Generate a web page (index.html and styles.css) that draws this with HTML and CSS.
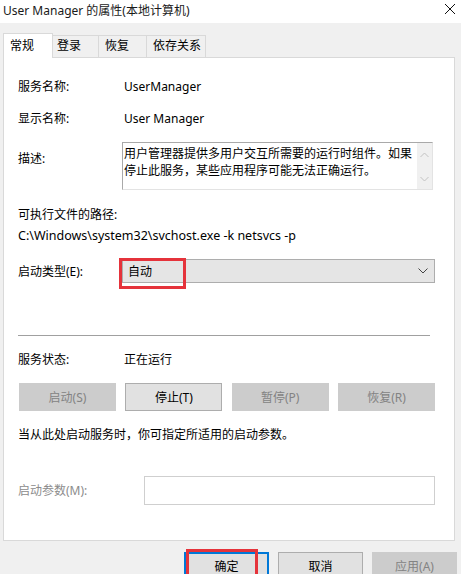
FILE: index.html
```html
<!DOCTYPE html>
<html lang="zh-CN">
<head>
<meta charset="utf-8">
<title>User Manager 的属性(本地计算机)</title>
<link rel="stylesheet" href="styles.css">
</head>
<body>
<div class="window">
  <div class="titlebar">
    <span class="title">User Manager 的属性(本地计算机)</span>
    <svg class="close" width="12" height="12" viewBox="0 0 12 12"><path d="M1 1 L11 11 M11 1 L1 11" stroke="#111" stroke-width="1" fill="none"/></svg>
  </div>
  <div class="tabs">
    <div class="tab active">常规</div>
    <div class="tab t2">登录</div>
    <div class="tab t3">恢复</div>
    <div class="tab t4">依存关系</div>
  </div>
  <div class="panel">
    <div class="row r1"><span class="label">服务名称:</span><span class="value">UserManager</span></div>
    <div class="row r2"><span class="label">显示名称:</span><span class="value">User Manager</span></div>
    <div class="row r3">
      <span class="label label-top">描述:</span>
      <div class="textarea">
        <div class="ta-text">用户管理器提供多用户交互所需要的运行时组件。如果<br>停止此服务，某些应用程序可能无法正确运行。</div>
        <div class="ta-scroll">
          <svg width="9" height="6" viewBox="0 0 9 6"><path d="M0.5 5 L4.5 1 L8.5 5" stroke="#c2c2c2" fill="none"/></svg>
          <svg width="9" height="6" viewBox="0 0 9 6"><path d="M0.5 1 L4.5 5 L8.5 1" stroke="#c2c2c2" fill="none"/></svg>
        </div>
      </div>
    </div>
    <div class="line r4">可执行文件的路径:</div>
    <div class="line r4b path">C:\Windows\system32\svchost.exe -k netsvcs -p</div>
    <div class="row r5">
      <span class="label">启动类型(E):</span>
      <div class="select">
        <span class="sel-text">自动</span>
        <svg class="chev" width="10" height="6" viewBox="0 0 10 6"><path d="M0.5 0.5 L5 5 L9.5 0.5" stroke="#444" fill="none"/></svg>
        <div class="mark mark-select"></div>
      </div>
    </div>
    <div class="sep"></div>
    <div class="row r6"><span class="label">服务状态:</span><span class="value">正在运行</span></div>
    <div class="btnrow">
      <div class="btn disabled">启动(S)</div>
      <div class="btn">停止(T)</div>
      <div class="btn disabled">暂停(P)</div>
      <div class="btn disabled">恢复(R)</div>
    </div>
    <div class="line r7">当从此处启动服务时，你可指定所适用的启动参数。</div>
    <div class="row r8">
      <span class="label label-wide dim">启动参数(M):</span>
      <div class="input"></div>
    </div>
  </div>
  <div class="footer">
    <div class="fbtn primary">确定<div class="mark mark-ok"></div></div>
    <div class="fbtn">取消</div>
    <div class="fbtn disabled">应用(A)</div>
  </div>
</div>
</body>
</html>
```
FILE: styles.css
```css
html, body {
  margin: 0;
  padding: 0;
  width: 461px;
  height: 574px;
  overflow: hidden;
  background: #f0f0f0;
}
body {
  font-family: "Noto Sans", "Noto Sans CJK SC", sans-serif;
  font-size: 12px;
  line-height: 17px;
  color: #000;
}
.titlebar {
  height: 23px;
  background: #fff;
  display: flex;
  align-items: flex-start;
  justify-content: space-between;
  padding: 2px 5px 0 3px;
  box-sizing: border-box;
}
.title { color: #1a1a1a; }
.close { margin-top: 1px; }
.tabs {
  display: flex;
  align-items: flex-end;
  padding-left: 3px;
  margin-top: 10px;
  height: 24px;
  position: relative;
  z-index: 2;
}
.tab {
  box-sizing: border-box;
  height: 22px;
  border: 1px solid #d9d9d9;
  border-left: none;
  border-bottom: none;
  background: #f0f0f0;
  padding: 1px 0 0 6px;
}
.tab.active {
  width: 50px;
  height: 25px;
  margin-bottom: -1px;
  background: #fff;
  border-left: 1px solid #d9d9d9;
  padding: 3px 0 0 6px;
}
.t2 { width: 46px; padding-left: 4px; }
.t3 { width: 48px; padding-left: 6px; }
.t4 { width: 59px; padding-left: 6px; }
.panel {
  box-sizing: border-box;
  margin-left: 3px;
  width: 452px;
  height: 484px;
  background: #fff;
  border: 1px solid #d9d9d9;
  padding: 0 19px 0 14px;
  position: relative;
  z-index: 1;
}
.row { display: flex; align-items: center; }
.label { width: 104px; flex: none; }
.label-wide { width: 126px; }
.label-top { align-self: flex-start; padding-top: 8px; }
.value { padding-left: 2px; }
.dim { color: #8c8c8c; }
.path { font-size: 12.5px; }
.r1 { margin-top: 20px; }
.r2 { margin-top: 15px; }
.r3 { margin-top: 15px; }
.textarea {
  box-sizing: border-box;
  width: 311px;
  height: 48px;
  border: 1px solid #a9a9a9;
  border-right-color: #e3e3e3;
  border-bottom-color: #e3e3e3;
  display: flex;
  justify-content: space-between;
}
.ta-text { padding: 2px 0 0 1px; }
.ta-scroll {
  width: 15px;
  background: #f0f0f0;
  display: flex;
  flex-direction: column;
  align-items: center;
  justify-content: space-between;
  padding: 9px 0 7px;
}
.r4 { margin-top: 16px; }
.r4b { margin-top: 4px; }
.r5 { margin-top: 15px; }
.select {
  box-sizing: border-box;
  position: relative;
  width: 313px;
  height: 24px;
  background: #e5e5e5;
  border: 1px solid #adadad;
  display: flex;
  align-items: center;
  justify-content: space-between;
  padding: 0 6px 0 5px;
}
.mark {
  position: absolute;
  border: 3px solid #e5333b;
  box-sizing: border-box;
}
.mark-select { left: -4px; top: -2px; width: 67px; height: 31px; }
.sep {
  margin-top: 52px;
  height: 1px;
  width: 412px;
  background: #a0a0a0;
}
.r6 { margin-top: 15px; }
.btnrow {
  margin-top: 15px;
  display: flex;
  justify-content: space-between;
  padding-left: 1px;
}
.btn {
  box-sizing: border-box;
  width: 97px;
  height: 28px;
  background: #e1e1e1;
  border: 1px solid #adadad;
  display: flex;
  align-items: center;
  justify-content: center;
}
.btn.disabled, .fbtn.disabled {
  background: #cccccc;
  border-color: #cccccc;
  color: #838383;
}
.r7 { margin-top: 15px; }
.r8 { margin-top: 33px; }
.input {
  box-sizing: border-box;
  width: 291px;
  height: 29px;
  border: 1px solid #cfcfcf;
}
.footer {
  display: flex;
  justify-content: flex-end;
  gap: 9px;
  margin-top: 11px;
  padding-right: 4px;
}
.fbtn {
  box-sizing: border-box;
  position: relative;
  width: 85px;
  height: 28px;
  background: #e1e1e1;
  border: 1px solid #adadad;
  display: flex;
  align-items: center;
  justify-content: center;
}
.fbtn.primary {
  border: 2px solid #0078d7;
}
.mark-ok { left: 0px; top: -5px; width: 72px; height: 34px; }
```
